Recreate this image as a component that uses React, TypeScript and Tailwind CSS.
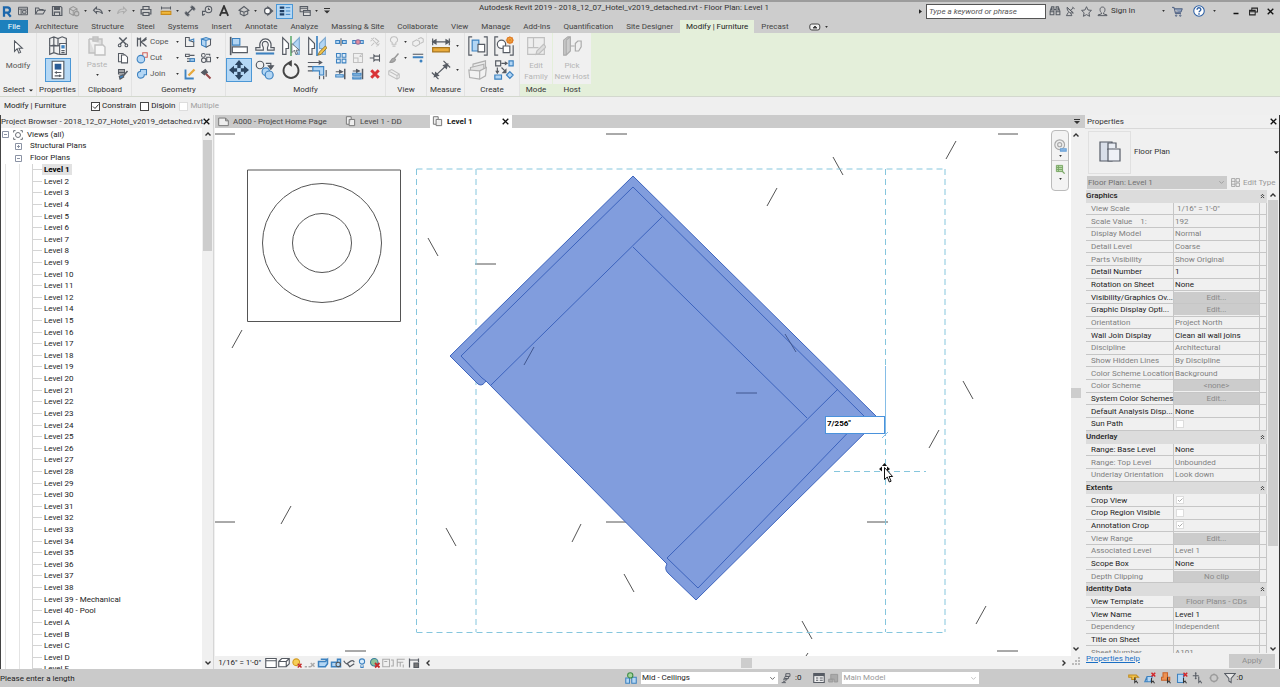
import React from 'react';
import clsx from 'clsx';

const INK = '#565b63';
const BLUE = '#3d82c0';
const SKY = '#b3d6f4';
const FADE = '#c0c0c0';

interface IconProps {
  className?: string;
  box?: string;
  stroke?: string;
  fill?: string;
  sw?: number;
  children?: React.ReactNode;
}

const Icon: React.FC<IconProps> = ({ className = 'w-3 h-3', box = '0 0 16 16', stroke = INK, fill = 'none', sw = 1.4, children }) => (
  <svg viewBox={box} className={clsx('shrink-0', className)} fill={fill} stroke={stroke} strokeWidth={sw} aria-hidden="true">
    {children}
  </svg>
);

const Dot = ({ className = 'w-[7px]' }: { className?: string }) => (
  <span className={clsx('flex justify-center shrink-0', className)}>
    <svg viewBox="0 0 4 3" className="w-[3px] h-[2px]"><path d="M0 0h4L2 3z" fill="#333" /></svg>
  </span>
);

const Arrow = ({ className = 'w-[5px] h-[3px]' }: { className?: string }) => (
  <svg viewBox="0 0 6 3" className={clsx('shrink-0', className)}><path d="M0 0h6L3 3z" fill="#222" /></svg>
);

const Chevron = ({ className, d }: { className?: string; d: string }) => (
  <svg viewBox="0 0 8 8" className={clsx('w-2 h-2 shrink-0', className)} fill="none" stroke="#333" strokeWidth="1.4"><path d={d} /></svg>
);
const UP = 'M1.5 5.5L4 3l2.500 2.500';
const DOWN = 'M1.500 2.500L4 5l2.500-2.500';
const LEFT = 'M5.500 1.500L3 4l2.500 2.500';
const RIGHT = 'M2.500 1.500L5 4L2.500 6.500';

const Close = ({ className = 'w-[7px] h-[7px]' }: { className?: string }) => (
  <svg viewBox="0 0 8 8" className={className} stroke="#111" strokeWidth="1.5"><path d="M.8.8l6.400 6.400M7.200.8L.8 7.200" /></svg>
);

/* ---------- title bar ---------- */

type Quick = { label: string; icon: React.ReactNode; active?: boolean } | 'dot' | 'gap';

const QUICK: Quick[] = [
  { label: 'Home', icon: <Icon sw={1.3}><path d="M2 3h12v10H2zM2 5.500h12M5.500 5.500V13M7.500 7.500H12V11H7.500z" /></Icon> },
  { label: 'Open', icon: <Icon><path d="M2 12V4h4l1.500 2H12v2M2 12l3-5h10l-3 5z" /></Icon> },
  { label: 'Save', icon: <Icon sw={1.6}><path d="M2 2h11l1.500 1.500V14H2zM5 2v4h6V2M4.500 14V9.500h7V14" /><path d="M5 3h6v3H5z" fill={INK} /></Icon> },
  { label: 'Synchronize', icon: <Icon stroke="#999"><path d="M2 5l5-3 5 3v6l-5 3-5-3zM2 5l5 3 5-3M7 8v6" /><circle cx="11.500" cy="11.500" r="3" fill="#c4c4c4" /></Icon> },
  'dot',
  { label: 'Undo', icon: <Icon sw={1.5}><path d="M6 3L2 7l4 4V8.700c4-.4 6 0 8 3C13.500 8 11 5.300 6 5.300z" /></Icon> },
  'dot',
  { label: 'Redo', icon: <Icon stroke="#adadad" sw={1.5}><path d="M10 3l4 4-4 4V8.700c-4-.4-6 0-8 3C2.500 8 5 5.300 10 5.300z" /></Icon> },
  'dot',
  { label: 'Print', icon: <Icon sw={1.600}><path d="M4 6V2h8v4M4 12H1.500V6h13v6H12M4 10h8v4H4z" /></Icon> },
  'gap',
  { label: 'Measure', icon: <Icon><path d="M2 4h12M2 2v4M14 2v4" /><path d="M1.500 8.500h13v4h-13z" fill="#f0b93c" stroke="#c98b1c" /></Icon> },
  'dot',
  { label: 'Aligned Dimension', icon: <Icon sw={1.5}><path d="M3 13L13 3M1 10l5 5M10 1l5 5" /><path d="M3 13V9.500L6.500 13zM13 3v3.500L9.500 3z" fill={INK} /></Icon> },
  { label: 'Tag by Category', icon: <Icon><circle cx="10" cy="6" r="4.300" /><path d="M10 3.500V6h2M2 14V8.500h4M2 14l3-2" /></Icon> },
  { label: 'Text', icon: <Icon sw={2.400} stroke="#333"><path d="M2.500 14.500L8 1.500l5.500 13M4.500 10.500h7" /></Icon> },
  'gap',
  { label: 'Default 3D View', icon: <Icon><path d="M1.500 7L8 2l6.500 5L8 9.500zM3 7.500V12l5 2.500 5-2.500V7.500M8 9.500v5" /></Icon> },
  'dot',
  { label: 'Section', icon: <Icon sw={1.800}><circle cx="7.500" cy="8" r="4" /><path d="M8 3l6 5-6 5z" fill={INK} /><circle cx="7.500" cy="8" r="3" fill="#fff" stroke="none" /></Icon> },
  { label: 'Thin Lines', active: true, icon: <Icon sw={2}><path d="M1 3.500h6M1 8h6M1 12.500h6" stroke="#1f3f66" strokeWidth="3" /><path d="M9 3.500h6M9 8h6M9 12.500h6" stroke={BLUE} strokeWidth="1.300" /></Icon> },
  'gap',
  { label: 'Switch Windows', icon: <Icon><path d="M1.500 2h10v7h-10zM1.500 4.200h10" /><path d="M6 7.500h9v6.500H6z" fill="#ddd" /><path d="M6 9.500h9" /></Icon> },
  'dot',
];

const TitleBar = () => (
  <header className="flex items-center h-5 border-t-2 border-[#9c9c9c] bg-[#cdcdcd]">
    <div className="flex items-center w-[330px] shrink-0">
      <button aria-label="Application menu" className="flex justify-center w-[14px]">
        <Icon className="w-3 h-[13px]" stroke="#1b66ab" sw={3}><path d="M4 15V2.500h4.500a3.500 3.500 0 0 1 0 7H4M8.500 9.500L13 15" /></Icon>
      </button>
      {QUICK.map((q, i) =>
        q === 'dot' ? <Dot key={i} /> : q === 'gap' ? <span key={i} className="w-[3px]" /> : (
          <button
            key={i}
            aria-label={q.label}
            className={clsx('flex items-center justify-center w-[17px] h-[15px]', q.active && 'bg-[#b5d8f5] border border-[#4b97d6]')}
          >
            {q.icon}
          </button>
        )
      )}
      <button aria-label="Customize" className="ml-1">
        <svg viewBox="0 0 6 6" className="w-1.5 h-1.5" fill="#333"><path d="M0 0h6v1H0zM0 2.500h6l-3 3z" /></svg>
      </button>
    </div>
    <h1 className="flex-1 text-center pb-[6px] pr-px whitespace-nowrap">Autodesk Revit 2019 - 2018_12_07_Hotel_v2019_detached.rvt - Floor Plan: Level 1</h1>
    <div className="flex items-center shrink-0 w-[361px]">
      <svg viewBox="0 0 4 6" className="w-[3px] h-[5px] mr-1" fill="#222"><path d="M0 0l4 3-4 3z" /></svg>
      <input aria-label="Search" placeholder="Type a keyword or phrase" className="w-[120px] h-[15px] px-0.5 bg-white border border-[#555] italic placeholder:text-[#555] outline-none" />
      <button aria-label="Find" className="w-[17px] flex justify-center">
        <Icon className="w-3 h-3"><path d="M2 7l1.500-4.500h3V13H1.500V8zM14 7l-1.500-4.500h-3V13h5V8zM6.500 6h3M1.500 9h5M9.500 9h5M4 4v4M12 4v4" /></Icon>
      </button>
      <button aria-label="Communication Center" className="w-[15px] flex justify-center">
        <Icon className="w-[11px] h-[11px]"><path d="M3 2c0 6 4 9 9 8zM3 2l9 8M8 6l4-3M10.500 1.500L14 4M5 9l-3 5h8l-2-4" /></Icon>
      </button>
      <button aria-label="Favorites" className="w-[16px] flex justify-center">
        <Icon className="w-[11px] h-[11px]"><path d="M8 1l2.200 4.800 5 .6-3.700 3.500 1 5.100L8 12.500 3.500 15l1-5.100L.8 6.400l5-.6z" /></Icon>
      </button>
      <button className="flex items-center gap-[3px] ml-[3px]">
        <Icon className="w-[11px] h-[11px]"><path d="M8 1.500c5 0 4 7 1.500 8.500v1.500l5 1.500v1H1.500v-1l5-1.500V10C4 8.500 3 1.500 8 1.500z" /></Icon>
        Sign In
      </button>
      <Dot className="w-[7px] ml-auto" />
      <button aria-label="App Store" className="w-5 flex justify-center">
        <Icon className="w-[11px] h-[11px]" stroke="#4d5f80"><path d="M0 2h3l2 9h8M3.500 4H15l-2 5H5" fill="#8fa0bd" /><circle cx="6" cy="14" r="1" /><circle cx="12" cy="14" r="1" /></Icon>
      </button>
      <button aria-label="Help" className="w-6 flex justify-center">
        <Icon className="w-3 h-3" stroke="#2c5fa4"><circle cx="8" cy="8" r="7" fill="#fff" /><path d="M5.500 6.200c0-3.500 5-3 5-.2 0 2-2.500 2-2.500 3.800M8 11v2" strokeWidth="1.900" /></Icon>
      </button>
      <Dot />
      <div className="flex items-center gap-[9px] ml-[14px] mr-[6px]">
        <button aria-label="Minimize"><Icon className="w-2 h-2" stroke="#111" sw={3}><path d="M3 13h10" /></Icon></button>
        <button aria-label="Restore"><Icon className="w-[9px] h-[9px]" stroke="#222" sw={1.800}><path d="M5 5V2h10v7h-3M1 6h10v8H1zM1 8.500h10" /></Icon></button>
        <button aria-label="Close"><Close /></button>
      </div>
    </div>
  </header>
);

/* ---------- ribbon ---------- */

const TABS = ['Architecture', 'Structure', 'Steel', 'Systems', 'Insert', 'Annotate', 'Analyze', 'Massing & Site', 'Collaborate', 'View', 'Manage', 'Add-Ins', 'Quantification', 'Site Designer', 'Modify | Furniture', 'Precast'];

const RibbonTabs = () => (
  <nav className="flex items-stretch h-[13px] bg-[#cdcdcd] text-[#444]">
    <button className="w-7 mr-px bg-[#1d80bd] text-white">File</button>
    <div className="flex gap-px">
      {TABS.map((t) => (
        <button key={t} className={clsx('px-[6px] whitespace-nowrap', t.startsWith('Modify') && 'bg-[#e4efda] text-[#222]')}>{t}</button>
      ))}
    </div>
    <button aria-label="Ribbon display" className="flex items-center gap-1 ml-[14px]">
      <svg viewBox="0 0 12 8" className="w-3 h-2" fill="#eee" stroke="#444"><rect x=".8" y="1" width="10" height="6" rx="2" /><path d="M4 5l2-2 2 2z" fill="#333" /></svg>
      <Dot className="w-1" />
    </button>
  </nav>
);

interface GroupProps {
  label: React.ReactNode;
  width: string;
  green?: boolean;
  children: React.ReactNode;
}

const Group: React.FC<GroupProps> = ({ label, width, green, children }) => (
  <section className={clsx('flex flex-col shrink-0 border-r', width, green ? 'bg-[#e4efda] border-[#e4efda]' : 'bg-[#f0f0f0] border-[#e2e2e2]')}>
    <div className="flex h-[51px] pt-px bg-[#f0f0f0]">{children}</div>
    <div className="flex items-center justify-center gap-1 h-3 text-[#333]">{label}</div>
  </section>
);

const Tool = ({ label, cell = 'w-[17px] h-4', active, children }: { label: string; cell?: string; active?: boolean; children: React.ReactNode }) => (
  <button aria-label={label} className={clsx('flex items-center justify-center shrink-0', cell, active && 'bg-[#b5d8f5] border border-[#4b97d6]')}>
    {children}
  </button>
);

const BIG = 'w-[26px] h-6';
const XL = 'w-5 h-5';

const JoinRow = ({ text, children }: { text: string; children: React.ReactNode }) => (
  <button className="flex items-center h-4 gap-[2px] text-[#555]">
    {children}
    <span className="w-[22px] text-left">{text}</span>
    <Dot />
  </button>
);

const Ribbon = () => (
  <div className="flex h-[64px] bg-[#e4efda] border-b border-[#d3d8ce]">
    <Group width="w-[37px]" label={<>Select <Arrow className="w-1 h-[3px]" /></>}>
      <button className="flex flex-col items-center w-full gap-[6px] pt-[6px] text-[#555]">
        <Icon className="w-[14px] h-[14px]" fill="#fff" sw={1.200}><path d="M4 1v12l3-3 2 5 2-1-2-4.500h4z" /></Icon>
        Modify
      </button>
    </Group>
    <Group width="w-[42px]" label="Properties">
      <div className="flex flex-col items-center w-full">
        <Tool label="Type Properties" cell={BIG}>
          <Icon className={XL} box="0 0 24 24"><path d="M2 3l5-2 5 2 5-2 5 2v9l-5-1-5 1-5-1-5 1zM12 3v9M2 13v9l5-2 6 2M7 1v19M2 12h12" /><path d="M14 9h8v13h-8z" fill="#fff" /><path d="M16 11h4v4h-4z" fill={BLUE} stroke="none" /><path d="M16 17.500h4M16 20h4" /></Icon>
        </Tool>
        <Tool label="Properties" cell={BIG} active>
          <Icon className={XL} box="0 0 24 24"><path d="M5 1.500h14v21H5z" fill="#fff" /><path d="M8 4.500h8v7H8z" fill="#2b5c96" stroke="none" /><path d="M8 15h8M8 19h8M10 13.500v3M14 17.500v3" /></Icon>
        </Tool>
      </div>
    </Group>
    <Group width="w-[53px]" label="Clipboard">
      <button className="flex flex-col items-center w-[36px] gap-[3px] pt-[2px] text-[#b5b5b5]">
        <Icon className="w-5 h-5" stroke={FADE} box="0 0 20 20"><path d="M2 3h13v6M2 3v14h6M6 1h5v4H6z" fill="#ddd" /><path d="M8 9h8l2 2v8H8z" fill="#f7f7f7" /></Icon>
        Paste
        <Dot />
      </button>
      <div className="flex flex-col">
        <Tool label="Cut to Clipboard" cell="w-4 h-4"><Icon><path d="M3 2l9 9M13 2l-9 9" strokeWidth="2" /><circle cx="3.500" cy="12.500" r="1.800" /><circle cx="12.500" cy="12.500" r="1.800" /></Icon></Tool>
        <Tool label="Copy" cell="w-4 h-4"><Icon><path d="M2 2h6l2 2v9H2z" /><path d="M6 4h5l3 3v7.500H6z" fill="#fff" /></Icon></Tool>
        <Tool label="Match Type" cell="w-4 h-4"><Icon><path d="M2 2h8v6H2zM2 4h8M2 6h8" /><path d="M14 4L8 11" strokeWidth="2" /><path d="M8 9l-5 2 1 4 5-3z" fill={BLUE} /></Icon></Tool>
      </div>
    </Group>
    <Group width="w-[94px]" label="Geometry">
      <div className="flex flex-col pl-[4px]">
        <JoinRow text="Cope"><Icon><path d="M2 2v12M6 2v12M14 2L7 8l7 6M2 4h4M10 7l4-3" strokeWidth="1.700" /></Icon></JoinRow>
        <JoinRow text="Cut"><Icon stroke={BLUE}><path d="M9 1h6v6H9z" stroke="#d0605a" /><circle cx="6.500" cy="9.500" r="5" fill={SKY} /></Icon></JoinRow>
        <JoinRow text="Join"><Icon stroke={BLUE} fill={SKY}><path d="M6 2h8v7h-3a4.500 4.500 0 1 1-5-4.500z" /></Icon></JoinRow>
      </div>
      <div className="grid grid-cols-2 content-start w-8 ml-px">
        <Tool label="Split Face" cell="w-4 h-4"><Icon><path d="M2 2h5v4l6 2v6H2z" /><path d="M7 6l6-2v4" stroke={BLUE} /></Icon></Tool>
        <Tool label="Paint" cell="w-4 h-4"><Icon stroke={BLUE}><path d="M2 4l6-2 6 2-6 2zM2 4v8l6 3V6z" fill={SKY} /><path d="M14 4v8l-6 3" stroke={INK} /></Icon></Tool>
        <Tool label="Beam Joins" cell="w-4 h-4"><Icon><path d="M2 3h5v3H2zM8 4.500h6M4 9h10M4 12.500h10" /><path d="M8 9h6v3.500H8z" fill={SKY} stroke={BLUE} /></Icon></Tool>
        <Tool label="Wall Joins" cell="w-4 h-4"><Icon><circle cx="4.500" cy="4.500" r="2.500" /><circle cx="5" cy="11" r="3" /><path d="M9 7h5v6H9zM8 3h5v2" /></Icon></Tool>
        <Tool label="Demolish" cell="w-4 h-4"><Icon><path d="M2 2v12h11" stroke={BLUE} strokeWidth="2.500" /><path d="M14 2L6 10" stroke="#e7a93b" strokeWidth="3" /></Icon></Tool>
        <Tool label="Hammer" cell="w-4 h-4"><Icon><path d="M2 6l5-4 3 4-4 3z" fill={INK} /><path d="M8 8l6 6" stroke="#9a4a4a" strokeWidth="2.500" /></Icon></Tool>
      </div>
      <span className="h-4 mt-4 flex items-center"><Dot /></span>
    </Group>
    <Group width="w-[160px]" label="Modify">
      <div className="grid grid-cols-4 content-start w-[104px]">
        <Tool label="Align" cell={BIG}><Icon className={XL} box="0 0 24 24"><path d="M2 1v22" strokeWidth="2" /><path d="M4 3h9v8H4z" fill={SKY} stroke={BLUE} /><path d="M4 13h18v7H4z" fill="#fff" /></Icon></Tool>
        <Tool label="Offset" cell={BIG}><Icon className={XL} box="0 0 24 24"><path d="M1 14h5C3 0 22 0 19 14h4v3h-8v-3c5-10-11-10-5 0v3H1z" fill="#fff" /><path d="M1 21h22" stroke={BLUE} strokeWidth="2.500" /></Icon></Tool>
        <Tool label="Mirror - Pick Axis" cell={BIG}><Icon className={XL} box="0 0 24 24"><path d="M2 2v20h4v-7h3V9z" fill="#fff" /><path d="M22 2v20h-4v-7h-3V9z" fill={SKY} stroke="#7da9d1" /><path d="M12 0v24" stroke="#3c9b4a" strokeWidth="1.500" /><path d="M13 9v11l3-3 2 5 2-1-2-4h4z" fill="#fff" strokeWidth="1" /></Icon></Tool>
        <Tool label="Mirror - Draw Axis" cell={BIG}><Icon className={XL} box="0 0 24 24"><path d="M2 2v20h4v-7h3V9z" fill="#fff" /><path d="M22 2v20h-4v-7h-3V9z" fill={SKY} stroke="#7da9d1" /><path d="M12 0v24" stroke={BLUE} strokeWidth="2" /><path d="M22 12l-7 7-2 4 4-1 7-8z" fill="#f0c34b" stroke="#8a6a22" strokeWidth="1" /></Icon></Tool>
        <Tool label="Move" cell={BIG} active><Icon className={XL} box="0 0 24 24" stroke="none" fill="#2c4560"><path d="M12 0l5 6h-3v4h-4V6H7zM12 24l-5-6h3v-4h4v4h3zM0 12l6-5v3h4v4H6v3zM24 12l-6 5v-3h-4v-4h4V7z" /><path d="M10 10h4v4h-4z" fill="#b5d8f5" /></Icon></Tool>
        <Tool label="Copy" cell={BIG}><Icon className={XL} box="0 0 24 24"><circle cx="6" cy="6" r="4.500" /><path d="M13 4h6v4" /><path d="M16 7h6l-3 4z" fill={INK} /><g fill={SKY} stroke={BLUE}><circle cx="13" cy="14" r="4.500" /><circle cx="17" cy="18" r="4.800" /></g></Icon></Tool>
        <Tool label="Rotate" cell={BIG}><Icon className={XL} box="0 0 24 24" stroke="#444" sw={2.200}><path d="M8 4.500a9 9 0 1 0 8 0" /><path d="M13 0v8L6.500 4z" fill="#444" stroke="none" /></Icon></Tool>
        <Tool label="Trim/Extend to Corner" cell={BIG}><Icon className={XL} box="0 0 24 24"><path d="M1 3h16M23 12v8" /><path d="M14 0l5 3-5 3z" fill={INK} stroke="none" /><path d="M1 8h6M1 13h6M15 19v4M20 19v4" /><path d="M7 8h13v10h-5v-5H7z" fill={SKY} stroke={BLUE} /></Icon></Tool>
      </div>
      <div className="grid grid-cols-3 content-start w-[51px] ml-[2px]">
        <Tool label="Split Element"><Icon stroke={BLUE}><path d="M1 6h5v4H1zM10 6h5v4h-5z" fill={SKY} /><path d="M8 3v10" stroke={INK} /></Icon></Tool>
        <Tool label="Split with Gap"><Icon stroke={BLUE}><path d="M1 6h4v4H1zM11 6h4v4h-4z" fill={SKY} /><circle cx="8" cy="8" r="3" fill="#e58c9c" stroke="#8f6e9b" /></Icon></Tool>
        <Tool label="Unpin"><Icon stroke={FADE}><path d="M3 3l10 10M2 7l5-5M8 3l5 4-4 4M10 14l4-4M3 13l4-4" /></Icon></Tool>
        <Tool label="Array"><Icon stroke={BLUE}><path d="M2 2h5v5H2zM9.500 2h5v5h-5zM2 9.500h5v5H2zM9.500 9.500h5v5h-5z" fill="#dcebf8" /></Icon></Tool>
        <Tool label="Scale"><Icon stroke={FADE}><path d="M2 2h12v12H2zM2 8h6v6M10 6h3M10 6l3-3" /></Icon></Tool>
        <Tool label="Pin"><Icon><path d="M14 3v10M14 5.500H8L6.500 4v8L8 10.500h6M6.500 8H1" /></Icon></Tool>
        <Tool label="Trim/Extend Single"><Icon><path d="M13 1v14" strokeWidth="2" /><path d="M1 5h7M6 3l4 2-4 2z" fill={INK} /><path d="M1 9h10v3H1z" fill={SKY} stroke={BLUE} /></Icon></Tool>
        <Tool label="Trim/Extend Multiple"><Icon><path d="M14 1v14" strokeWidth="2" /><path d="M1 4h7M6 2l4 2-4 2z" fill={INK} /><path d="M1 7h11v2.500H1zM1 12h11v2.500H1z" fill={SKY} stroke={BLUE} /></Icon></Tool>
        <Tool label="Delete"><Icon stroke="#d93438" sw={4}><path d="M3 3l10 10M13 3L3 13" /></Icon></Tool>
      </div>
    </Group>
    <Group width="w-[41px]" label="View">
      <div className="flex flex-col w-full text-[#999]">
        <div className="flex h-4">
          <Tool label="Hide in View" cell="w-4 h-4"><Icon stroke={FADE}><path d="M8 1a4 4 0 0 1 2.500 7.500V11h-5V8.500A4 4 0 0 1 8 1zM6 13.500h4" /></Icon></Tool><span className="flex items-center"><Dot /></span>
          <Tool label="Displace"><Icon stroke={FADE}><path d="M1 8l5-3 4 2v4l-5 3-4-2zM8 4l4-2 3 2v4l-4 2" /></Icon></Tool>
        </div>
        <div className="flex h-4">
          <Tool label="Override Graphics" cell="w-4 h-4"><Icon stroke="#999"><path d="M14 2L8 9" strokeWidth="2" /><path d="M8 8l2 2c-1 4-5 4-8 4 2-1 2-6 6-6z" fill="#aaa" /></Icon></Tool><span className="flex items-center"><Dot /></span>
          <Tool label="Linework"><Icon><path d="M1 3h14" /><path d="M1 7h14" strokeWidth="2.600" stroke={BLUE} /><circle cx="12" cy="12" r="2" fill={BLUE} stroke="none" /></Icon></Tool>
        </div>
        <Tool label="Selection Box" cell="w-4 h-4"><Icon stroke={FADE}><path d="M1 4l4-2 10 6v5l-3 2L1 9zM1 4l11 6v5M12 10l3-2" /></Icon></Tool>
      </div>
    </Group>
    <Group width="w-[38px]" label="Measure">
      <div className="flex flex-col pl-px">
        <div className="flex items-center"><Tool label="Measure" cell={BIG}><Icon className={XL} box="0 0 24 24"><path d="M2 7h20M2 3v8M22 3v8" /><path d="M2 7l4-2.500v5zM22 7l-4-2.500v5z" fill={INK} /><path d="M2 14h20v5H2z" fill="#e9aa3a" stroke="#a8751d" /></Icon></Tool><Dot /></div>
        <div className="flex items-center"><Tool label="Dimension" cell={BIG}><Icon className={XL} box="0 0 24 24"><path d="M5 19L19 6M1 15l8 8M15 1l8 8" /><path d="M4 20l1.500-5 3.500 3.500zM20 5l-5 1.500 3.500 3.500z" fill={INK} /></Icon></Tool><Dot /></div>
      </div>
    </Group>
    <Group width="w-[55px]" label="Create">
      <div className="grid grid-cols-2 content-start w-[52px]">
        <Tool label="Create Group" cell={BIG}><Icon className={XL} box="0 0 24 24"><path d="M5 1H1v22h4M19 1h4v22h-4" /><path d="M5 5h8v13H5z" fill={SKY} stroke={BLUE} /><path d="M12 10h8v9h-8z" fill="#fff" /></Icon></Tool>
        <Tool label="Create Similar" cell={BIG}><Icon className={XL} box="0 0 24 24"><path d="M5 1H1v22h4M19 23h4V11" /><circle cx="9" cy="10" r="5" fill="#fff" /><path d="M11 12h8v8h-8z" fill="#fff" /><g stroke="#e07b25"><circle cx="19" cy="5" r="3.500" fill="#f6b64b" /><path d="M19 0v10M14 5h10M15.500 1.500l7 7M22.500 1.500l-7 7" strokeWidth=".8" /></g></Icon></Tool>
        <Tool label="Create Assembly" cell={BIG}><Icon className={XL} box="0 0 24 24" stroke="#b0b0b0"><path d="M6 5l15-4v11l-15 5z" fill="#ececec" /><path d="M3 9l16-4v11L3 21z" fill="#e4e4e4" /><path d="M1 12l13 1 8-4-1 10-7 4-12-2z" fill="#f2f2f2" /><path d="M14 13v10" /></Icon></Tool>
        <Tool label="Create Parts" cell={BIG}><Icon className={XL} box="0 0 24 24"><path d="M2 1h6v6H2zM9 4h6M4 9v6M9 9l5 5" /><path d="M13 1.500l4 2.500-4 2.500zM1.500 13h5L4 17zM15 10v6h-6z" fill={INK} stroke="none" /><g fill={SKY} stroke={BLUE}><path d="M18 1h5v6h-5zM1 18h8v5H1zM19 14l4 4-4 4-4-4z" /></g></Icon></Tool>
      </div>
    </Group>
    <Group width="w-[33px]" label="Mode" green>
      <button className="flex flex-col items-center w-full pt-[2px] text-[#b5b5b5] leading-[11px]">
        <Icon className="w-5 h-5 mb-1" stroke={FADE} box="0 0 24 24"><path d="M2 2h20v20H2zM9 2v12H2M9 14h6" fill="#eee" /><path d="M21 10l3 3-8 8-4 1 1-4z" fill="#ddd" /></Icon>
        <span>Edit</span><span>Family</span>
      </button>
    </Group>
    <Group width="w-[39px]" label="Host" green>
      <button className="flex flex-col items-center w-full pt-[2px] text-[#b5b5b5] leading-[11px] whitespace-nowrap">
        <Icon className="w-5 h-5 mb-1" stroke="#aaa" box="0 0 24 24"><path d="M2 5l5-4h3v17l-5 5H2zM5 5v18M5 5l5-4" fill="#ccc" /><path d="M10 12h5M16 9l3-3h4v7l-3 5h-4z" /></Icon>
        <span>Pick</span><span>New Host</span>
      </button>
    </Group>
  </div>
);

const OptionCheck = ({ label, checked, disabled }: { label: string; checked?: boolean; disabled?: boolean }) => (
  <label className={clsx('flex items-center gap-[2px] mr-1', disabled && 'text-[#a0a0a0]')}>
    <span className="grid">
      <input
        type="checkbox"
        defaultChecked={checked}
        disabled={disabled}
        className={clsx('peer appearance-none w-[9px] h-[9px] col-start-1 row-start-1 border bg-white', disabled ? 'border-[#ddd]' : 'border-[#444]')}
      />
      <svg viewBox="0 0 9 9" className="w-[9px] h-[9px] col-start-1 row-start-1 pointer-events-none invisible peer-checked:visible" fill="none" stroke="#333"><path d="M2 4.500l2 2 3.500-4" /></svg>
    </span>
    {label}
  </label>
);

const OptionsBar = () => (
  <div className="flex items-center h-[18px] bg-[#efefef] text-[#222]">
    <span className="w-[87px] ml-[4px]">Modify | Furniture</span>
    <OptionCheck label="Constrain" checked />
    <OptionCheck label="Disjoin" />
    <OptionCheck label="Multiple" disabled />
  </div>
);

/* ---------- project browser ---------- */

const LEVELS = [
  ...Array.from({ length: 38 }, (_, i) => i + 1).filter((n) => n !== 13).map((n) => `Level ${n}`),
  'Level 39 - Mechanical',
  'Level 40 - Pool',
  ...['A', 'B', 'C', 'D', 'E'].map((c) => `Level ${c}`),
];

const Expander = ({ open }: { open?: boolean }) => (
  <svg viewBox="0 0 7 7" className="w-[7px] h-[7px] shrink-0" fill="#fff" stroke="#8b93a5" strokeWidth="1">
    <path d="M.5.5h6v6h-6zM2 3.500h3" />
    {!open && <path d="M3.500 2v3" />}
  </svg>
);

const ProjectBrowser = () => (
  <aside className="flex flex-col w-[213px] shrink-0 border-r border-[#d6d6d6] bg-white">
    <div className="flex items-center justify-between h-[13px] shrink-0 pr-[3px] bg-[#f0f0f0]">
      <h2 className="whitespace-nowrap">Project Browser - 2018_12_07_Hotel_v2019_detached.rvt</h2>
      <button aria-label="Close project browser"><Close /></button>
    </div>
    <div className="flex flex-1 min-h-0">
      <div className="flex-1 overflow-hidden pt-px">
        <ul className="flex flex-col h-[calc(100%+6px)] text-[#222]">
          <li className="flex flex-1 items-center min-h-0 pl-px gap-[4px]">
            <Expander open />
            <Icon className="w-[10px] h-[10px]"><path d="M1 4V1h3M12 1h3v3M15 12v3h-3M4 15H1v-3" /><circle cx="8" cy="8" r="4" /></Icon>
            <span>Views (all)</span>
          </li>
          <li className="flex flex-1 items-center min-h-0 pl-[14px] gap-2"><Expander /><span>Structural Plans</span></li>
          <li className="flex flex-1 items-center min-h-0 pl-[14px] gap-2"><Expander open /><span>Floor Plans</span></li>
          {LEVELS.map((name, i) => (
            <li key={name} className="flex flex-1 items-center min-h-0 ml-[4px] border-l border-[#e4e4e4]">
              <span className="self-stretch w-[14px] border-r border-[#e4e4e4]" />
              <span className="self-stretch w-[13px] border-r border-[#d4d4d4]" />
              <span className="w-[9px] border-t border-[#d4d4d4]" />
              <button className={clsx('px-[2px] leading-[11px] whitespace-nowrap', i === 0 && 'font-bold text-black bg-[#e2e2e2]')}>{name}</button>
            </li>
          ))}
        </ul>
      </div>
      <div className="flex flex-col items-center w-[11px] bg-[#f0f0f0]">
        <Chevron d={UP} className="my-[2px]" />
        <div className="w-[9px] h-[111px] bg-[#cdcdcd]" />
        <Chevron d={DOWN} className="mt-auto mb-[2px]" />
      </div>
    </div>
  </aside>
);

/* ---------- drawing area ---------- */

const HATCH = [
  [215, 134, 235, 134], [606, 134, 627, 134], [998, 134, 1018, 134], [475, 264, 496, 264],
  [606, 522, 627, 522], [215, 522, 235, 522], [867, 522, 888, 522], [345, 651, 366, 651], [997, 651, 1018, 651],
  [956, 141, 946, 159], [833, 157, 843, 175], [777, 188, 767, 206], [428, 238, 438, 256], [242, 330, 232, 348],
  [291, 506, 281, 524], [446, 528, 456, 546], [581, 524, 572, 542], [624, 574, 634, 592], [963, 381, 973, 399],
  [939, 430, 929, 448], [986, 606, 976, 624], [802, 621, 812, 639], [808, 653, 806, 656],
];

const polygon = (r: number, sides: number) =>
  Array.from({ length: sides }, (_, i) => {
    const a = (i / sides) * Math.PI * 2;
    return `${(322 + r * Math.cos(a)).toFixed(1)},${(243 + r * Math.sin(a)).toFixed(1)}`;
  }).join(' ');

const Canvas = () => (
  <div className="relative flex-1 min-h-0 overflow-hidden bg-white">
    <svg width="856" height="528" viewBox="215 128 856 528" fill="none" className="max-w-none">
      <g stroke="#555">
        {HATCH.map(([x1, y1, x2, y2]) => (
          <path key={`${x1}-${y1}`} d={`M${x1} ${y1}L${x2} ${y2}`} />
        ))}
        <path d="M247.500 170h153v151.500h-153z" />
        <polygon points={polygon(59.500, 36)} />
        <polygon points={polygon(29.500, 28)} />
      </g>
      <g stroke="#85c6dd" strokeDasharray="6 4">
        <path d="M416.500 169H945M416.500 169v463M945 169v463M416.500 632.500H945" />
        <path d="M476 169v463M885.500 169v463M834 471.500h92" />
      </g>
      <path d="M633 176L450 356l28 28q4 3 8-3l181 183q-3 5 1 9l28 27L879 419z" fill="#819ddd" stroke="#3c63bd" />
      <g stroke="#3c63bd">
        <path d="M633 187L461 356l21 22 4 3M633 187l231 229-166 172-31-30" />
        <path d="M662 217L491 385M633 247l174 171M838 389L667 558" />
        <path d="M534 347l-10 18M785 334l11 18M736 393h21" stroke="#41578f" />
      </g>
      <path d="M885.500 366v70M882 438l6-6" stroke="#85bde6" />
      <g fill="#111">
        <path d="M884.500 463l2.500 3h-5zM879 469l3-2.500v5zM890 469l-3-2.500v5z" />
        <path d="M884.500 467.500v12l2.800-2.500 2 5 1.800-.8-2-4.700h3.500z" fill="#fff" stroke="#111" />
      </g>
    </svg>
    <input
      aria-label="Listening dimension"
      defaultValue={'7/256"'}
      className="absolute left-[610px] top-[288px] w-[60px] h-[18px] px-px pb-[3px] bg-white border border-[#4a92dc] font-bold text-black outline-none"
    />
    <div className="absolute right-[2px] top-[2px] flex flex-col items-center w-[18px] h-[61px] py-1 rounded-sm border border-[#bbb] bg-[#f3f3f3]">
      <button aria-label="Steering wheel" className="pt-[4px]">
        <Icon className="w-[13px] h-[13px]" stroke="#a8a8a8"><circle cx="7" cy="7" r="6" fill="#eee" /><circle cx="7" cy="7" r="2.500" /><path d="M8 12h7v3H8z" fill="#8db9e6" stroke="#6ba2d8" /></Icon>
      </button>
      <Dot className="w-2 my-[3px]" />
      <span className="w-full border-t border-[#ccc]" />
      <button aria-label="Zoom" className="pt-[3px]">
        <Icon className="w-[11px] h-[11px]" stroke="#7aa866"><path d="M2 2h9v9H2zM2 5h9M2 8h9M5 2v9" fill="#b9d9a8" /><path d="M10 10l4 4" strokeWidth="2" /></Icon>
      </button>
      <Dot className="w-2 mt-[3px]" />
    </div>
  </div>
);

const SheetIcon = ({ plan }: { plan?: boolean }) => (
  <Icon className="w-[11px] h-[11px]" stroke="#777" fill="#eee">
    {plan ? <path d="M2 1h7v4h5v9H6v-2H2zM9 5H6v7" /> : <path d="M1 3h10l4 4v7H1zM11 3v4h4" />}
  </Icon>
);

const ViewTabs = () => (
  <div className="flex items-stretch h-[13px] shrink-0 bg-[#cbcbcb] text-[#444]">
    <button className="flex items-center gap-[4px] w-[127px] pl-[3px] whitespace-nowrap"><SheetIcon />A000 - Project Home Page</button>
    <button className="flex items-center gap-[4px] w-[88px] pl-[3px] whitespace-nowrap"><SheetIcon plan />Level 1 - DD</button>
    <div className="flex items-center w-[82px] pl-[2px] pr-[3px] bg-white">
      <button className="flex items-center gap-[4px] font-bold text-[#222]"><SheetIcon plan />Level 1</button>
      <button aria-label="Close view" className="ml-auto"><Close /></button>
    </div>
    <button aria-label="View list" className="ml-auto mr-[5px]">
      <svg viewBox="0 0 6 6" className="w-1.5 h-1.5" fill="#333"><path d="M0 0h6v1H0zM0 2h6l-3 3z" /></svg>
    </button>
  </div>
);

const VIEW_TOOLS: [string, React.ReactNode][] = [
  ['Detail Level', <Icon sw={1.500}><path d="M1 2h14v12H1zM1 5h14" fill="#fff" /></Icon>],
  ['Visual Style', <Icon sw={1.500}><path d="M1 6l4-4h10v7l-4 4H1zM1 6h10v7M11 6l4-4" fill="#fff" /></Icon>],
  ['Sun Path', <Icon><circle cx="7" cy="7" r="4.500" fill="#f6cf58" stroke="#d49a1e" /><path d="M9 9l5 5M14 9l-5 5" stroke="#c42d2d" strokeWidth="2" /></Icon>],
  ['Shadows', <Icon stroke="#aaa"><path d="M1 13h3M6 13h3M9 8l5 5M14 8l-5 5" strokeWidth="2" /></Icon>],
  ['Rendering', <Icon stroke={BLUE}><path d="M2 6h9l3-3v6l-3 4H2zM5 3h9" fill={SKY} strokeWidth="2" /></Icon>],
  ['Crop View', <Icon stroke={BLUE}><path d="M2 7h8V3h4v10H2z" fill={SKY} strokeWidth="2" /><circle cx="11" cy="10" r="3" stroke="#555" /></Icon>],
  ['Crop Region', <Icon sw={1.700}><path d="M1 5c3 5 4 5 7 2s6-3 7 0M5 8l4 5 6-4" /></Icon>],
  ['Reveal Hidden', <Icon stroke={BLUE}><circle cx="8" cy="6" r="3.500" fill="#d9ecfb" /><path d="M6.500 11v3h3v-3" /></Icon>],
  ['Worksharing', <Icon><circle cx="7" cy="7" r="5" fill="#8fc39a" stroke="#3a7f9c" /><path d="M8 8l6 6M14 8l-6 6" stroke="#c42d2d" strokeWidth="2.400" /></Icon>],
  ['Temporary View', <Icon stroke="#aaa"><path d="M1 3h9v10H1zM12 4h3v8h-3M3 6h4" /></Icon>],
  ['Analytical Model', <Icon stroke="#aaa"><path d="M3 13V3h10M3 7h8M7 7v6M11 10v4" /></Icon>],
  ['Constraints', <Icon sw={1.600}><path d="M2 2v12M2 4h12M14 2v5" /><path d="M8 8h6v6H8z" fill="#777" /></Icon>],
];

const ViewControls = () => (
  <div className="flex items-center h-[13px] shrink-0 bg-[#f0f0f0] text-[#222]">
    <button className="w-[46px] text-right mr-[3px] whitespace-nowrap">1/16" = 1'-0"</button>
    <div className="flex">
      {VIEW_TOOLS.map(([label, icon]) => (
        <button key={label} aria-label={label} className="flex justify-center w-[13px]">{icon}</button>
      ))}
    </div>
    <Chevron d={LEFT} className="ml-1" />
    <div className="flex items-center flex-1 ml-[309px]">
      <div className="w-[11px] h-[10px] bg-[#cdcdcd]" />
    </div>
    <Chevron d={RIGHT} className="mr-[3px]" />
  </div>
);

const DrawingArea = () => (
  <main className="flex flex-col flex-1 min-w-0 ml-px">
    <ViewTabs />
    <div className="flex flex-1 min-h-0">
      <div className="flex flex-col flex-1 min-w-0">
        <Canvas />
        <ViewControls />
      </div>
      <div className="flex flex-col items-center w-[14px] pr-1 bg-[#f0f0f0]">
        <Chevron d={UP} className="mt-[3px]" />
        <div className="w-[10px] h-[10px] mt-[249px] bg-[#cdcdcd]" />
        <Chevron d={DOWN} className="mt-auto" />
        <svg viewBox="0 0 8 8" className="w-2 h-2 my-1" fill="#bbb"><path d="M6 0h2v2H6zM3 3h2v2H3zM6 3h2v2H6zM0 6h2v2H0zM3 6h2v2H3zM6 6h2v2H6z" /></svg>
      </div>
    </div>
  </main>
);

/* ---------- properties ---------- */

type Prop = [name: string, value: string, kind?: 'text' | 'button' | 'check', live?: boolean];

const SECTIONS: { title: string; rows: Prop[] }[] = [
  {
    title: 'Graphics',
    rows: [
      ['View Scale', ' 1/16" = 1\'-0"'],
      ['Scale Value    1:', '192'],
      ['Display Model', 'Normal'],
      ['Detail Level', 'Coarse'],
      ['Parts Visibility', 'Show Original'],
      ['Detail Number', '1', 'text', true],
      ['Rotation on Sheet', 'None', 'text', true],
      ['Visibility/Graphics Ov...', 'Edit...', 'button', true],
      ['Graphic Display Opti...', 'Edit...', 'button', true],
      ['Orientation', 'Project North'],
      ['Wall Join Display', 'Clean all wall joins', 'text', true],
      ['Discipline', 'Architectural'],
      ['Show Hidden Lines', 'By Discipline'],
      ['Color Scheme Location', 'Background'],
      ['Color Scheme', '<none>', 'button'],
      ['System Color Schemes', 'Edit...', 'button', true],
      ['Default Analysis Disp...', 'None', 'text', true],
      ['Sun Path', '', 'check', true],
    ],
  },
  {
    title: 'Underlay',
    rows: [
      ['Range: Base Level', 'None', 'text', true],
      ['Range: Top Level', 'Unbounded'],
      ['Underlay Orientation', 'Look down'],
    ],
  },
  {
    title: 'Extents',
    rows: [
      ['Crop View', 'on', 'check', true],
      ['Crop Region Visible', '', 'check', true],
      ['Annotation Crop', 'on', 'check', true],
      ['View Range', 'Edit...', 'button'],
      ['Associated Level', 'Level 1'],
      ['Scope Box', 'None', 'text', true],
      ['Depth Clipping', 'No clip', 'button'],
    ],
  },
  {
    title: 'Identity Data',
    rows: [
      ['View Template', 'Floor Plans - CDs', 'button', true],
      ['View Name', 'Level 1', 'text', true],
      ['Dependency', 'Independent'],
      ['Title on Sheet', '', 'text', true],
      ['Sheet Number', 'A101'],
    ],
  },
];

const PropValue = ({ row: [name, value, kind] }: { row: Prop }) => {
  if (kind === 'button') {
    return <button className="block w-full h-[11px] bg-[#cccccc] text-[#8a8a8a] leading-[11px]">{value}</button>;
  }
  if (kind === 'check') {
    return (
      <span className="grid w-2 ml-px">
        <input type="checkbox" aria-label={name} disabled defaultChecked={value === 'on'} className="peer appearance-none w-2 h-2 col-start-1 row-start-1 border border-[#ddd] bg-white" />
        <svg viewBox="0 0 8 8" className="w-2 h-2 col-start-1 row-start-1 invisible peer-checked:visible" fill="none" stroke="#aaa"><path d="M2 4l1.500 1.500L6.500 2.500" /></svg>
      </span>
    );
  }
  return <span>{value}</span>;
};

const PropertiesPanel = () => (
  <aside className="flex flex-col w-[195px] shrink-0 bg-[#f0f0f0] border-r border-[#333]">
    <div className="flex items-center justify-between h-[13px] shrink-0 pl-[2px] pr-[2px]">
      <h2>Properties</h2>
      <button aria-label="Close properties"><Close /></button>
    </div>
    <div className="flex items-center h-[47px] shrink-0 pl-[3px] border-t border-[#d9d9d9]">
      <div className="flex items-center justify-center w-[43px] h-[43px] border border-[#e0e0e0]">
        <Icon className="w-6 h-6" box="0 0 24 24" stroke="#555b66" sw={1.200}>
          <path d="M2 2h12v19H2z" fill="#d9dfea" /><path d="M10 10V3h8v5" fill="#e9edf4" /><path d="M10 9h12v12H10z" fill="#eef1f7" />
        </Icon>
      </div>
      <span className="ml-[3px]">Floor Plan</span>
      <Arrow className="w-[5px] h-[3px] ml-auto" />
    </div>
    <div className="flex items-center h-[15px] shrink-0 pl-[2px]">
      <div className="relative">
        <select aria-label="View instance" disabled className="block appearance-none w-[140px] h-[13px] px-px bg-[#cbcbcb] text-[#707070] opacity-100">
          <option>Floor Plan: Level 1</option>
        </select>
        <svg viewBox="0 0 8 8" className="absolute right-[2px] top-[3px] w-[7px] h-[7px]" fill="none" stroke="#999"><path d={DOWN} /></svg>
      </div>
      <button disabled className="flex items-center gap-[3px] ml-1 text-[#999] whitespace-nowrap">
        <Icon className="w-[9px] h-[9px]" stroke="#999"><path d="M1 1h6v14H1zM9 1h6v6H9zM9 9h6v6H9zM1 6h6M1 11h6" /></Icon>
        Edit Type
      </button>
    </div>
    <div className="flex flex-1 min-h-0">
      <div className="flex-1 overflow-hidden pl-px">
        <table className="w-full h-[calc(100%+6px)] table-fixed border-separate border-spacing-0">
          <colgroup><col className="w-[88px]" /><col className="w-[86px]" /><col /></colgroup>
          {SECTIONS.map((s) => (
            <tbody key={s.title}>
              <tr>
                <th colSpan={2} scope="colgroup" className="p-0 text-left font-medium leading-3 bg-[#dcdcdc] text-[#222]">{s.title}</th>
                <td className="p-0 bg-[#dcdcdc]">
                  <svg viewBox="0 0 6 6" className="w-[5px] h-[6px]" fill="none" stroke="#222"><path d="M1 3l2-2 2 2M1 5.500l2-2 2 2" /></svg>
                </td>
              </tr>
              {s.rows.map((row) => (
                <tr key={row[0]} className={row[3] ? 'text-[#222]' : 'text-[#808080]'}>
                  <td className="p-0 pl-[5px] border-b border-r border-[#c6c6c6] leading-[11px] whitespace-pre">{row[0]}</td>
                  <td className={clsx('p-0 border-b border-r border-[#c6c6c6] leading-[11px] whitespace-pre', row[2] !== 'button' && 'pl-px')}><PropValue row={row} /></td>
                  <td className="p-0 border-b border-r border-[#c6c6c6]" />
                </tr>
              ))}
            </tbody>
          ))}
        </table>
      </div>
      <div className="flex flex-col items-center w-[12px] bg-[#f0f0f0]">
        <Chevron d={UP} className="my-px" />
        <div className="w-[10px] h-[346px] bg-[#cdcdcd]" />
        <Chevron d={DOWN} className="mt-auto" />
      </div>
    </div>
    <div className="flex justify-between h-4 shrink-0 pl-px pr-1">
      <a href="#help" className="text-[#1a6fc4] underline leading-3">Properties help</a>
      <button disabled className="w-[46px] h-[14px] mt-px bg-[#cbcbcb] text-[#8f8f8f]">Apply</button>
    </div>
  </aside>
);

/* ---------- status bar ---------- */

const StatusSelect = ({ label, value, disabled }: { label: string; value: string; disabled?: boolean }) => (
  <div className="relative">
    <select aria-label={label} disabled={disabled} className={clsx('block appearance-none w-[137px] h-3 px-px bg-white opacity-100', disabled ? 'text-[#999]' : 'text-[#222]')}>
      <option>{value}</option>
    </select>
    <svg viewBox="0 0 8 8" className="absolute right-[2px] top-[3px] w-[7px] h-[7px]" fill="none" stroke={disabled ? '#bbb' : '#555'}><path d={DOWN} /></svg>
  </div>
);

const SELECTION_TOOLS: [string, React.ReactNode][] = [
  ['Select links', <Icon stroke="#c08a1c"><path d="M1 4h10l3 3h-4v3H5V7H1z" fill="#f2c34d" /><path d="M9 7v7l2-2 2 3" stroke="#333" /></Icon>],
  ['Select underlay', <Icon stroke={BLUE}><path d="M1 13l3-7h7l-2 7zM4 6v7" fill={SKY} /><path d="M10 1l5 5M15 1l-5 5" stroke="#d3262b" strokeWidth="2" /><path d="M10 8v6l2-2 2 3" stroke="#333" /></Icon>],
  ['Select pinned', <Icon stroke="#c7622a"><path d="M4 1h6v6h3v4H2V7h2z" fill="#ee9353" /><path d="M10 7v7l2-2 2 3" stroke="#333" /></Icon>],
  ['Select by face', <Icon stroke={BLUE}><path d="M2 3h8v11H2z" fill={SKY} /><path d="M10 1l5 5M15 1l-5 5" stroke="#d3262b" strokeWidth="2" /><path d="M10 8v6l2-2 2 3" stroke="#333" /></Icon>],
  ['Drag on selection', <Icon><path d="M5 1v8M1 5h8M4 2l1-1 1 1M4 8l1 1 1-1" /><path d="M9 6v8l2-2 2 3" /></Icon>],
  ['Background processes', <Icon stroke="#9a9a9a" sw={1.800}><circle cx="8" cy="8" r="4.500" /><path d="M8 2v2M8 12v2M2 8h2M12 8h2" /></Icon>],
];

const StatusBar = () => (
  <footer className="flex items-center h-[18px] bg-[#cacaca] text-[#222]">
    <span className="w-[625px] pt-px">Please enter a length</span>
    <Icon className="w-3 h-3 mr-1" stroke={BLUE}><path d="M1 8h5v7H1zM9 7h6v8H9z" fill={SKY} /><circle cx="7" cy="4.500" r="3.500" fill="#a6d49c" stroke="#3d8b45" /></Icon>
    <StatusSelect label="Active workset" value="Mid - Ceilings" />
    <button className="flex items-center gap-[3px] ml-[3px] mr-3">
      <Icon className="w-[11px] h-[11px]"><path d="M7 1h6v4H7zM6 5h5v3H5zM3 9h6l-3 3H3M1 14h6" /></Icon>
      :0
    </button>
    <button aria-label="Design options"><Icon className="w-[12px] h-[12px]" sw={1.500}><path d="M1 2h14v12H1z" fill="#eee" /><path d="M1 4h14" strokeWidth="3" /><path d="M4 8h3M4 11h3M9 8h4M9 11h4" /></Icon></button>
    <button aria-label="Add to set" className="mx-[3px]"><Icon className="w-[11px] h-[11px]" stroke="#999"><path d="M4 2h10v11H9V9H4zM1 9h6v4H1z" fill="#aaa" /></Icon></button>
    <StatusSelect label="Design option" value="Main Model" disabled />
    <div className="flex items-center ml-auto pr-[37px]">
      {SELECTION_TOOLS.map(([label, icon]) => (
        <button key={label} aria-label={label} className="flex justify-center w-4">{icon}</button>
      ))}
      <button className="flex items-center gap-px pl-[2px]">
        <Icon className="w-3 h-3"><path d="M1 2h14L9.500 8.500V14l-3-2V8.500z" fill="#e6e6e6" /></Icon>
        :0
      </button>
    </div>
  </footer>
);

export default function App() {
  return (
    <div className="flex flex-col h-screen overflow-hidden bg-[#f0f0f0] font-[Roboto,'Noto_Sans',sans-serif] text-[8px] leading-3 text-[#333]">
      <TitleBar />
      <RibbonTabs />
      <Ribbon />
      <OptionsBar />
      <div className="flex flex-1 min-h-0 border-l border-[#444]">
        <ProjectBrowser />
        <DrawingArea />
        <PropertiesPanel />
      </div>
      <StatusBar />
    </div>
  );
}
